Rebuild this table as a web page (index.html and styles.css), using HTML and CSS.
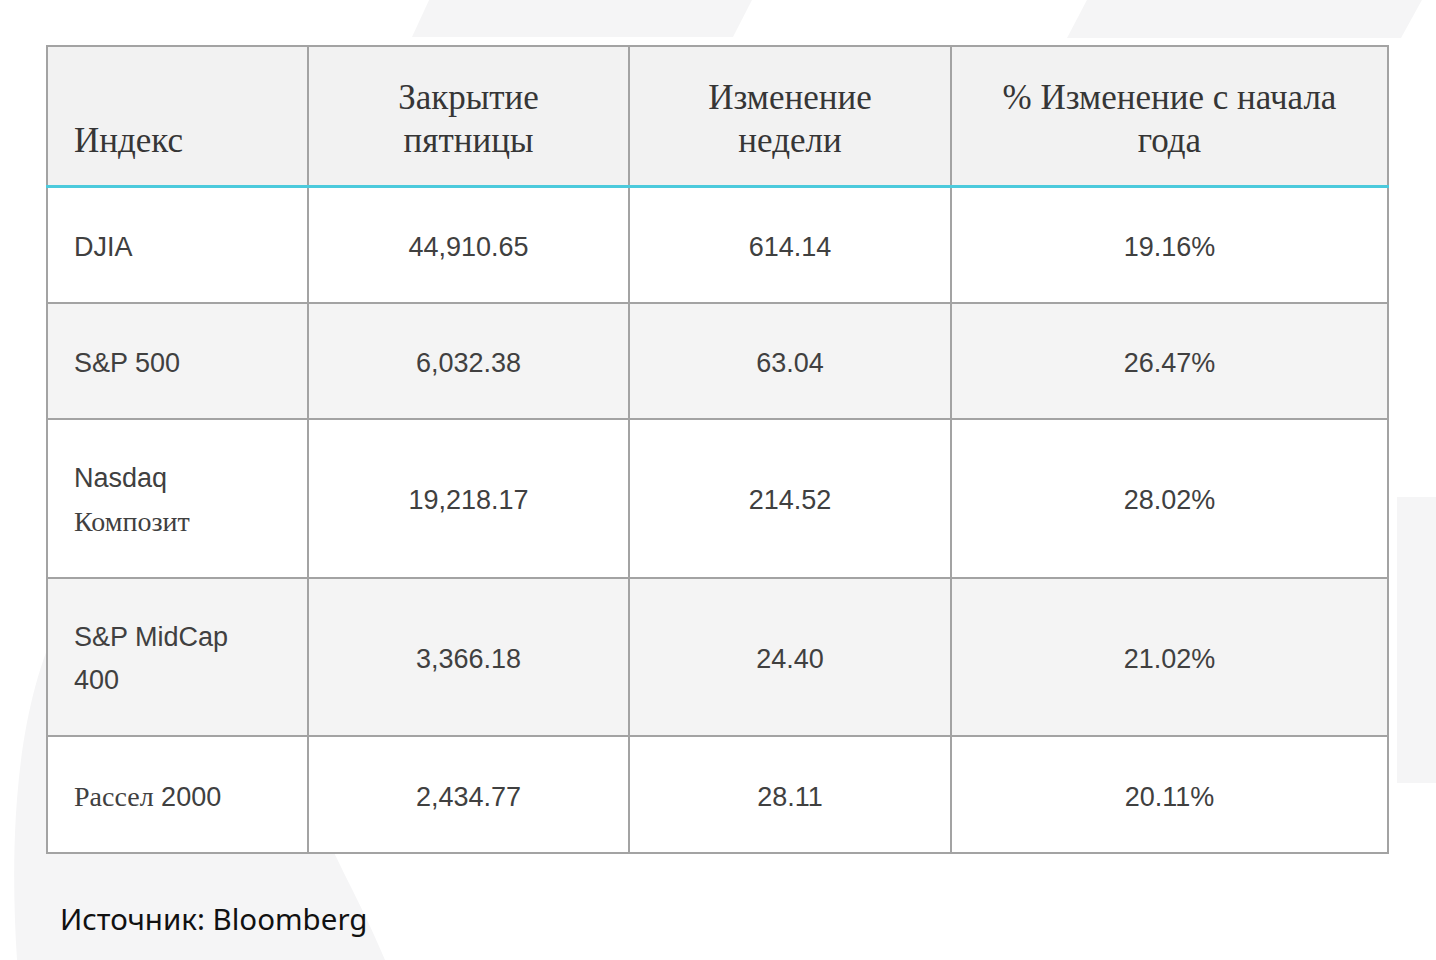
FILE: index.html
```html
<!DOCTYPE html>
<html lang="ru">
<head>
<meta charset="utf-8">
<title>Индексы</title>
<link rel="stylesheet" href="styles.css">
</head>
<body>
<svg class="backdrop" width="1436" height="960" viewBox="0 0 1436 960" aria-hidden="true">
  <polygon points="430,-2 753,-2 733,37 412,37" fill="#f5f5f6"/>
  <polygon points="1088,-2 1423,-2 1401,38 1067,38" fill="#f5f5f6"/>
  <rect x="1397" y="497" width="39" height="286" fill="#f5f5f6"/>
  <path d="M60,620 C20,700 8,820 17,960 L385,960 C360,900 335,860 320,820 L300,620 Z" fill="#f5f5f6"/>
</svg>
<main class="page">
  <table class="indices">
    <colgroup>
      <col class="c1"><col class="c2"><col class="c3"><col class="c4">
    </colgroup>
    <thead>
      <tr>
        <th class="left">Индекс</th>
        <th>Закрытие<br>пятницы</th>
        <th>Изменение<br>недели</th>
        <th>% Изменение с начала<br>года</th>
      </tr>
    </thead>
    <tbody>
      <tr>
        <td class="left">DJIA</td>
        <td>44,910.65</td>
        <td>614.14</td>
        <td>19.16%</td>
      </tr>
      <tr class="alt">
        <td class="left">S&amp;P 500</td>
        <td>6,032.38</td>
        <td>63.04</td>
        <td>26.47%</td>
      </tr>
      <tr class="tall">
        <td class="left">Nasdaq<br><span class="cy">Композит</span></td>
        <td>19,218.17</td>
        <td>214.52</td>
        <td>28.02%</td>
      </tr>
      <tr class="alt tall">
        <td class="left">S&amp;P MidCap<br>400</td>
        <td>3,366.18</td>
        <td>24.40</td>
        <td>21.02%</td>
      </tr>
      <tr>
        <td class="left"><span class="cy">Рассел</span> 2000</td>
        <td>2,434.77</td>
        <td>28.11</td>
        <td>20.11%</td>
      </tr>
    </tbody>
  </table>
  <p class="source">Источник: Bloomberg</p>
</main>
</body>
</html>
```
FILE: styles.css
```css
html, body {
  margin: 0;
  padding: 0;
  background: #ffffff;
}
body {
  width: 1436px;
  height: 960px;
  overflow: hidden;
  position: relative;
}
.backdrop {
  position: absolute;
  left: 0;
  top: 0;
  z-index: 0;
}
.page {
  position: relative;
  z-index: 1;
  padding: 45px 0 0 46px;
}
.indices {
  border-collapse: collapse;
  table-layout: fixed;
  width: 1341px;
  border: 2px solid #8e8e8e;
}
.c1 { width: 261px; }
.c2 { width: 321px; }
.c3 { width: 322px; }
.c4 { width: 437px; }
.indices th {
  font-family: "Liberation Serif", "Times New Roman", serif;
  font-weight: normal;
  font-size: 35px;
  line-height: 43px;
  color: #363636;
  background: #f2f2f2;
  text-align: center;
  vertical-align: bottom;
  padding: 29px 20px 23px;
  border: 2px solid #a3a3a3;
  border-bottom: 3px solid #4ccadc;
}
.indices td {
  font-family: "Liberation Sans", Arial, sans-serif;
  font-size: 27px;
  line-height: 43px;
  color: #404040;
  background: #ffffff;
  text-align: center;
  vertical-align: middle;
  padding: 38px 20px 33px;
  border: 2px solid #a3a3a3;
}
.indices tr.tall td {
  padding-top: 37px;
  padding-bottom: 33px;
}
.indices tr.alt td {
  background: #f4f4f4;
}
.indices .left {
  text-align: left;
  padding-left: 26px;
}
.cy {
  font-family: "Liberation Serif", "Times New Roman", serif;
  font-size: 28px;
}
.source {
  margin: 47px 0 0 14px;
  font-family: "Noto Sans", "Open Sans", sans-serif;
  font-size: 29.5px;
  line-height: 36px;
  color: #111111;
}
```
